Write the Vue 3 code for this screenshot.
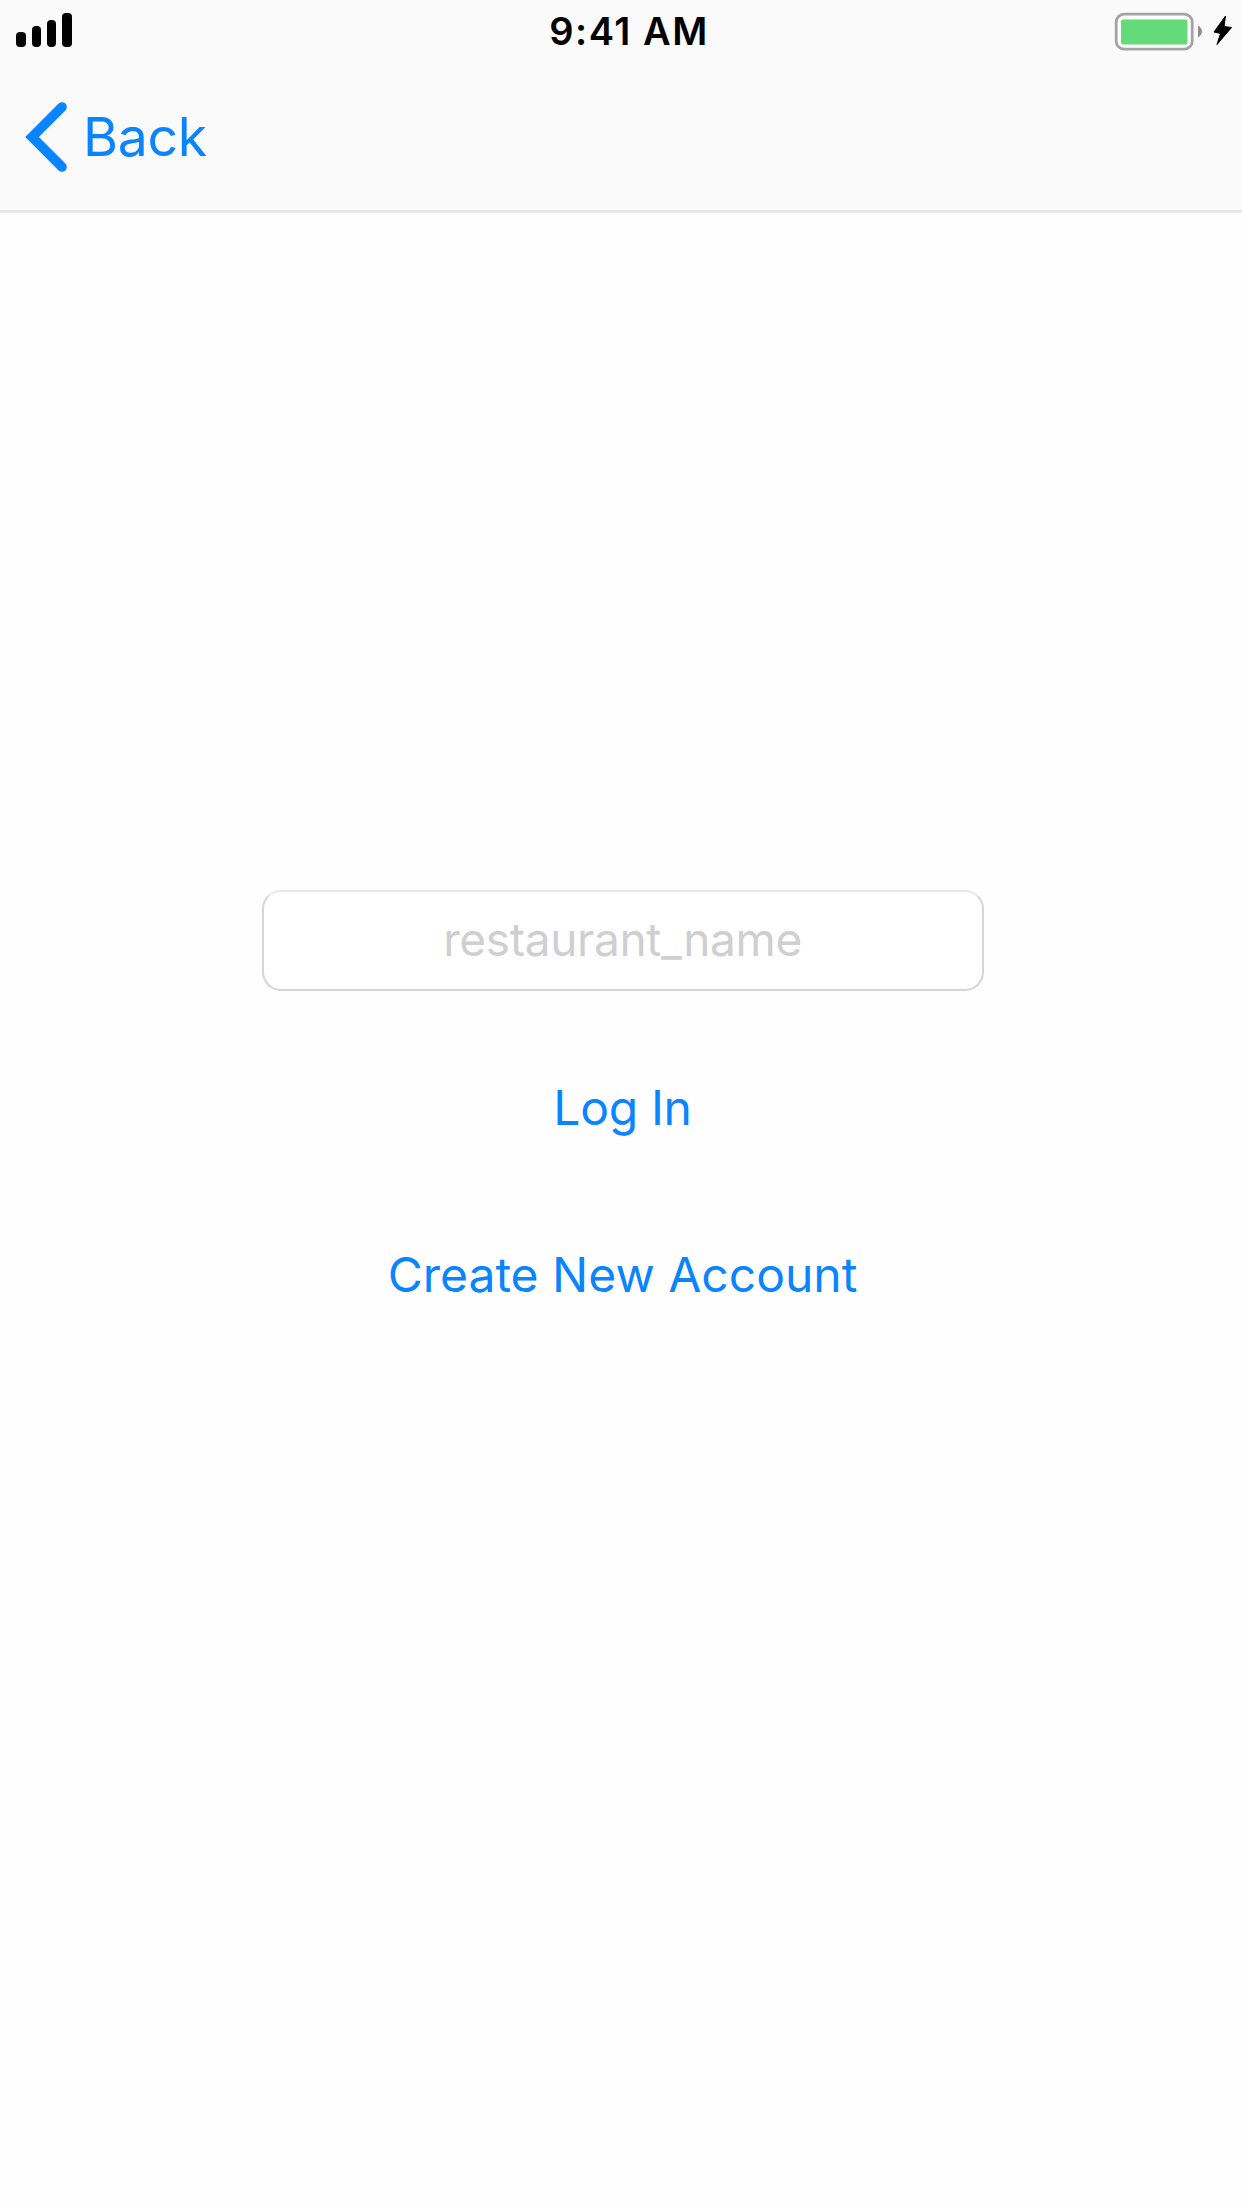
<script setup>
const bars = [
  { x: 0, y: 19, w: 10, h: 15 },
  { x: 16, y: 13, w: 9, h: 21 },
  { x: 31, y: 7, w: 9, h: 27 },
  { x: 46, y: 0, w: 10, h: 34 }
]
</script>

<template>
  <div class="screen">
    <header class="top">
      <div class="status">
        <svg class="signal" width="57" height="35" viewBox="0 0 57 35">
          <rect v-for="b in bars" :key="b.x" :x="b.x" :y="b.y" :width="b.w" :height="b.h" rx="4" fill="#000" />
        </svg>
        <span class="time">9:41 AM</span>
        <svg class="battery" width="120" height="40" viewBox="0 0 120 40">
          <rect x="2.2" y="2.2" width="76" height="35" rx="8" fill="#fff" stroke="#a3a3a3" stroke-width="2.8" />
          <rect x="7" y="7.5" width="66.5" height="25" rx="2" fill="#65da78" />
          <path d="M84.500 14 Q90.500 19.500 84.500 25 Z" fill="#8c8c8c" stroke="#8c8c8c" />
          <path d="M111.500 4 L100 20 L106.500 21.500 L103 32.500 L117.500 15.500 L110 14.500 Z" fill="#000" stroke="#000" stroke-linejoin="round" />
        </svg>
      </div>
      <nav class="nav">
        <svg class="chevron" width="44" height="72" viewBox="0 0 44 72">
          <path d="M38 6 L8 36 L38 66" fill="none" stroke="#0a84ff" stroke-width="9.6" stroke-linecap="round" />
        </svg>
        <span class="back">Back</span>
      </nav>
    </header>
    <main class="form">
      <div class="field"><span class="placeholder">restaurant_name</span></div>
      <a class="link login">Log In</a>
      <a class="link create">Create New Account</a>
    </main>
  </div>
</template>

<style>
body { background: #fefefe; }
</style>

<style scoped>
.screen {
  width: 1242px;
  height: 2208px;
  overflow: hidden;
  background: #fefefe;
  font-family: Inter, "Liberation Sans", sans-serif;
  color: #0a84ff;
}
.top {
  box-sizing: border-box;
  height: 213px;
  background: #fafafa;
  border-bottom: 3px solid #e8e8e8;
}
.status {
  display: grid;
  grid-template-columns: 1fr auto 1fr;
  height: 60px;
}
.signal { margin: 13px 0 0 16px; }
.time {
  margin-top: 1px;
  margin-left: 16px;
  font-size: 38px;
  line-height: 60px;
  font-weight: 600;
  letter-spacing: 1.5px;
  color: #000;
  white-space: nowrap;
}
.battery { margin: 12px 8px 0 0; justify-self: end; }
.nav {
  display: flex;
  align-items: flex-start;
  padding: 41px 0 0 24px;
}
.back {
  margin-left: 15px;
  font-size: 53.5px;
  line-height: 72px;
  letter-spacing: -0.3px;
}
.form {
  display: flex;
  flex-direction: column;
  align-items: center;
  padding-top: 677px;
}
.field {
  box-sizing: border-box;
  display: flex;
  justify-content: center;
  width: 722px;
  height: 101px;
  margin-left: 3px;
  border: 2px solid #d6d6d6;
  border-top-color: #e9e9e9;
  border-radius: 19px;
  background: #fff;
}
.placeholder {
  font-size: 46px;
  line-height: 95px;
  letter-spacing: -0.35px;
  color: #cfcfd2;
}
.link {
  margin-left: 3px;
  font-size: 48px;
  line-height: 60px;
  white-space: nowrap;
}
.login { margin-top: 87px; letter-spacing: -0.3px; }
.create { margin-top: 107px; }
</style>
